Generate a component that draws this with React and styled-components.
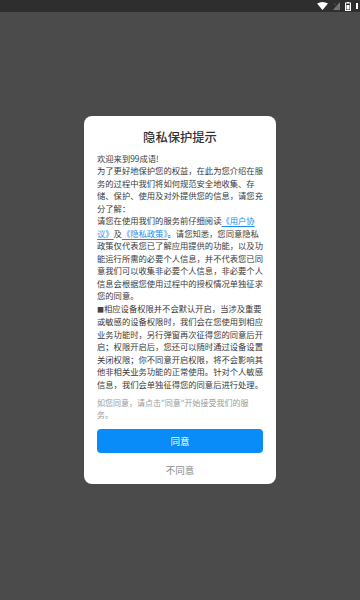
import React from "react";
import styled, { createGlobalStyle } from "styled-components";

const GlobalStyle = createGlobalStyle`
    html, body {
        margin: 0;
        padding: 0;
        background: #4b4b4b;
    }
    * {
        box-sizing: border-box;
    }
`;

const Screen = styled.div`
    position: relative;
    width: 360px;
    height: 600px;
    background: #4b4b4b;
    display: flex;
    align-items: center;
    justify-content: center;
    font-family: "Noto Sans CJK SC", "Noto Sans", sans-serif;
`;

const StatusBar = styled.div`
    position: absolute;
    top: 0;
    left: 0;
    right: 0;
    height: 12px;
    background: #2e2e2e;
    display: flex;
    align-items: center;
    justify-content: flex-end;
    gap: 5px;
    padding-right: 2px;
`;

const Card = styled.div`
    width: 192px;
    background: #fff;
    border-radius: 8px;
    padding: 13px 13px 7px;
    display: flex;
    flex-direction: column;
`;

const Title = styled.h2`
    margin: 0;
    font-size: 12.3px;
    line-height: 16px;
    font-weight: 500;
    color: #333;
    text-align: center;
`;

const Body = styled.div`
    margin-top: 7px;
    font-size: 8.3px;
    line-height: 12.5px;
    color: #3a3a3a;
    line-break: strict;
`;

const Para = styled.p`
    margin: 0;
`;

const Link = styled.span`
    color: #1c8df0;
    text-decoration: underline;
    text-decoration-thickness: 0.5px;
    text-underline-offset: 1.5px;
`;

const Bullet = styled.span`
    font-size: 7px;
    color: #444;
`;

const Hint = styled.p`
    margin: 7px 0 0;
    font-size: 8px;
    line-height: 11.5px;
    color: #9a9a9a;
`;

const AgreeButton = styled.button`
    margin-top: 9px;
    height: 24px;
    border: none;
    border-radius: 4px;
    background: #0a8cf8;
    color: #fff;
    font-family: inherit;
    font-size: 9.5px;
    padding: 0;
`;

const DeclineButton = styled.button`
    margin-top: 10px;
    height: 14px;
    border: none;
    background: none;
    color: #8a8a8a;
    font-family: inherit;
    font-size: 9.5px;
    line-height: 14px;
    padding: 0;
`;

const Wifi = () => (
    <svg width="11" height="8" viewBox="0 0 11 8">
        <path d="M0 1.6 Q5.5 -1.6 11 1.6 L5.5 8 Z" fill="#fff" />
    </svg>
);

const Signal = () => (
    <svg width="7" height="8" viewBox="0 0 7 8">
        <path d="M7 0 L7 8 L0 8 Z" fill="#777" />
        <path d="M1 1 L6 7" stroke="#555" strokeWidth="0.8" />
    </svg>
);

const Battery = () => (
    <svg width="6" height="9" viewBox="0 0 6 9">
        <rect x="2" y="0" width="2" height="1" fill="#fff" />
        <rect x="0.5" y="1" width="5" height="7.5" fill="none" stroke="#fff" strokeWidth="1" />
        <rect x="1.5" y="3" width="3" height="4.5" fill="#fff" />
    </svg>
);

const Dot = styled.span`
    width: 2px;
    height: 6px;
    background: #fff;
`;

export default function App() {
    return (
        <>
            <GlobalStyle />
            <Screen>
                <StatusBar>
                    <Wifi />
                    <Signal />
                    <Battery />
                    <Dot />
                </StatusBar>
                <Card>
                    <Title>隐私保护提示</Title>
                    <Body>
                        <Para>欢迎来到99成语!</Para>
                        <Para>
                            为了更好地保护您的权益，在此为您介绍在服务的过程中我们将如何规范安全地收集、存储、保护、使用及对外提供您的信息，请您充分了解：
                        </Para>
                        <Para>
                            请您在使用我们的服务前仔细阅读<Link>《用户协议》</Link>及<Link>《隐私政策》</Link>。请您知悉，您同意隐私政策仅代表您已了解应用提供的功能，以及功能运行所需的必要个人信息，并不代表您已同意我们可以收集非必要个人信息，非必要个人信息会根据您使用过程中的授权情况单独征求您的同意。
                        </Para>
                        <Para>
                            <Bullet>■</Bullet>相应设备权限并不会默认开启，当涉及重要或敏感的设备权限时，我们会在您使用到相应业务功能时，另行弹窗再次征得您的同意后开启；权限开启后，您还可以随时通过设备设置关闭权限；你不同意开启权限，将不会影响其他非相关业务功能的正常使用。针对个人敏感信息，我们会单独征得您的同意后进行处理。
                        </Para>
                    </Body>
                    <Hint>如您同意，请点击"同意"开始接受我们的服务。</Hint>
                    <AgreeButton>同意</AgreeButton>
                    <DeclineButton>不同意</DeclineButton>
                </Card>
            </Screen>
        </>
    );
}
